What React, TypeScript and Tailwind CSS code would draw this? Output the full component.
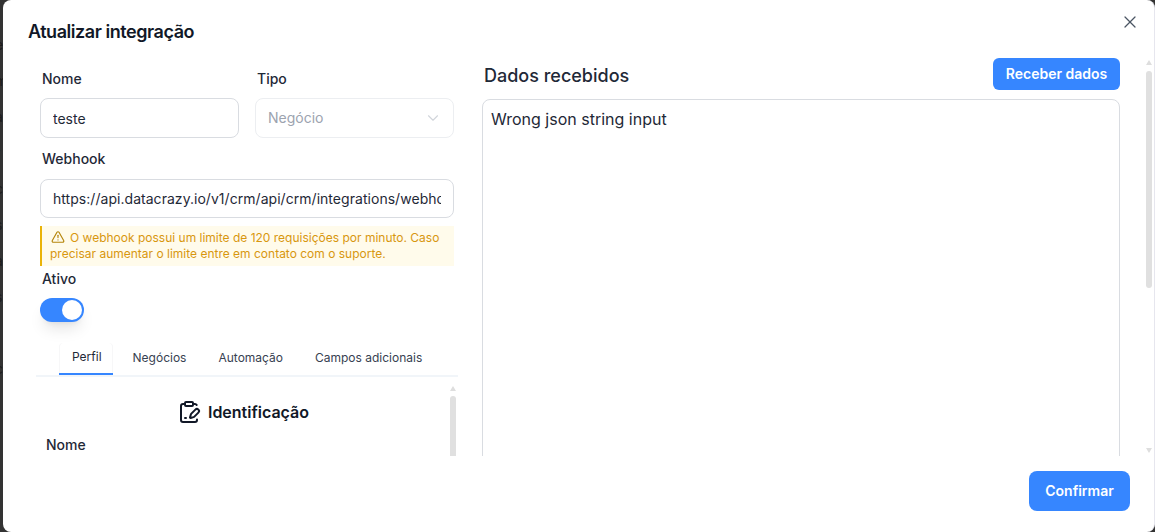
import { AlertTriangle, ChevronDown, ClipboardPenLine, X } from "lucide-react"

const backdropLetters = ["e", "m", "a", "r", "c", "s", "a", "s", "t", "c"]
const tabs = ["Perfil", "Negócios", "Automação", "Campos adicionais"]

function ScrollUp() {
  return (
    <svg width="6" height="5" viewBox="0 0 6 5" className="shrink-0">
      <polygon points="3,0 6,5 0,5" fill="#dedede" />
    </svg>
  )
}

function ScrollDown() {
  return (
    <svg width="6" height="5" viewBox="0 0 6 5" className="shrink-0">
      <polygon points="0,0 6,0 3,5" fill="#dedede" />
    </svg>
  )
}

export default function App() {
  return (
    <div className="flex h-[532px] w-[1155px] overflow-hidden bg-[#333333] font-['Inter',sans-serif] text-[#111827]">
      {/* Backdrop sliver */}
      <div className="w-[3px] shrink-0 overflow-hidden pt-[36px]">
        {backdropLetters.map((letter, i) => (
          <div key={i} className="ml-[-5px] h-[36px] text-sm leading-[18px] text-[#1c1c1c]">
            {letter}
          </div>
        ))}
      </div>

      {/* Modal */}
      <div className="flex min-w-0 flex-1 flex-col rounded-lg border-r border-[#e6e6ee] bg-white">
        <header className="flex h-[58px] shrink-0 justify-between">
          <h2 className="ml-[25px] mt-[20px] text-lg leading-6 font-semibold tracking-[-0.45px] text-[#111827]">
            Atualizar integração
          </h2>
          <X className="mr-[14px] mt-[12px] size-5 text-[#4b5563]" strokeWidth={1.5} />
        </header>

        <div className="flex h-[398px] shrink-0 overflow-hidden pl-[33px]">
          {/* Left column */}
          <div className="flex w-[422px] shrink-0 flex-col">
            <div className="px-1 pt-[11px]">
              <div className="grid grid-cols-2 gap-4">
                <div>
                  <label className="ml-0.5 block h-5 text-sm leading-5 font-[450] text-[#1f2937]">Nome</label>
                  <input
                    readOnly
                    value="teste"
                    className="mt-[9px] h-10 w-full rounded-lg border border-[#d9dce1] px-3 text-sm text-[#1f2937] outline-none"
                  />
                </div>
                <div>
                  <label className="ml-0.5 block h-5 text-sm leading-5 font-[450] text-[#1f2937]">Tipo</label>
                  <div className="mt-[9px] flex h-10 items-center justify-between rounded-lg border border-[#eceef1] pr-[11px] pl-3 text-sm text-[#9ca3af]">
                    Negócio
                    <ChevronDown className="size-[18px] text-[#d1d5db]" strokeWidth={1.5} />
                  </div>
                </div>
              </div>

              <label className="mt-[11px] ml-0.5 block h-5 text-sm leading-5 font-[450] text-[#1f2937]">Webhook</label>
              <input
                readOnly
                value="https://api.datacrazy.io/v1/crm/api/crm/integrations/webhook/receive"
                className="mt-[10px] h-[39px] w-full rounded-lg border border-[#d9dce1] px-3 text-sm tracking-[0.04px] text-[#1f2937] outline-none"
              />

              <div className="mt-[8px] h-10 border-l-2 border-[#eab308] bg-[#fffbeb] pl-2 text-xs leading-4 text-[#d8970f]">
                <div className="pt-1">
                  <AlertTriangle className="mr-[5px] ml-px inline size-3.5 align-[-2px] text-[#b5850b]" />
                  O webhook possui um limite de 120 requisições por minuto. Caso
                  <br />
                  precisar aumentar o limite entre em contato com o suporte.
                </div>
              </div>

              <label className="mt-[3px] ml-0.5 block h-5 text-sm leading-5 font-[450] text-[#1f2937]">Ativo</label>
              <div className="mt-[9px] flex h-6 w-11 items-center justify-end rounded-full bg-[#3686ff] pr-0.5 shadow-lg">
                <div className="size-5 rounded-full bg-white" />
              </div>
            </div>

            {/* Tabs */}
            <div className="mt-[21px] flex h-[34px] shrink-0 gap-2 border-b-2 border-[#f1f5f9] pl-[23px] text-xs text-[#374151]">
              {tabs.map((tab, i) => (
                <div
                  key={tab}
                  className={
                    i === 0
                      ? "mb-[-2px] h-[32px] rounded-t border-b-2 border-b-[#3686ff] pt-[6px] pr-[11px] pl-[13px] leading-4 text-[#1f2937] shadow-[inset_1px_0_0_#f7f7f8,inset_-1px_0_0_#f7f7f8]"
                      : "px-3 pt-[7px] leading-4"
                  }
                >
                  {tab}
                </div>
              ))}
            </div>

            <div className="flex min-h-0 flex-1 overflow-hidden">
              <div className="min-w-0 flex-1">
                <div className="mt-[23px] flex items-center justify-center gap-[7px]">
                  <ClipboardPenLine className="size-6 text-[#111827]" strokeWidth={2} />
                  <span className="text-base leading-5 font-semibold text-[#111827]">Identificação</span>
                </div>
                <div className="mt-[11px] ml-[10px] text-sm leading-5 font-[450] text-[#1f2937]">Nome</div>
              </div>
              <div className="mr-0.5 flex w-[6px] shrink-0 flex-col pt-[9px]">
                <ScrollUp />
                <div className="mt-[5px] h-[120px] rounded-t-sm bg-[#e0e0e0]" />
              </div>
            </div>
          </div>

          {/* Right column */}
          <div className="ml-6 flex w-[638px] shrink-0 flex-col">
            <div className="flex h-[41px] shrink-0 items-start justify-between">
              <h3 className="mt-[6px] ml-0.5 text-lg leading-6 font-medium text-[#1f2937]">Dados recebidos</h3>
              <button className="h-8 w-[127px] rounded-md bg-[#3686ff] text-sm font-semibold text-white">
                Receber dados
              </button>
            </div>
            <div className="h-[400px] shrink-0 rounded-lg border border-[#d9dce1] px-2 py-[7px] text-base leading-6 text-[#1f2937]">
              Wrong json string input
            </div>
          </div>

          {/* Right scrollbar */}
          <div className="ml-[26px] flex w-[6px] shrink-0 flex-col pt-[2px]">
            <ScrollUp />
            <div className="mt-[6px] h-[217px] rounded-sm bg-[#e0e0e0]" />
            <div className="mt-auto mb-[3px]">
              <ScrollDown />
            </div>
          </div>
        </div>

        <footer className="flex flex-1 items-start justify-end pt-[15px] pr-[24px]">
          <button className="h-10 w-[101px] rounded-lg bg-[#3686ff] text-sm font-semibold text-white">Confirmar</button>
        </footer>
      </div>
    </div>
  )
}
